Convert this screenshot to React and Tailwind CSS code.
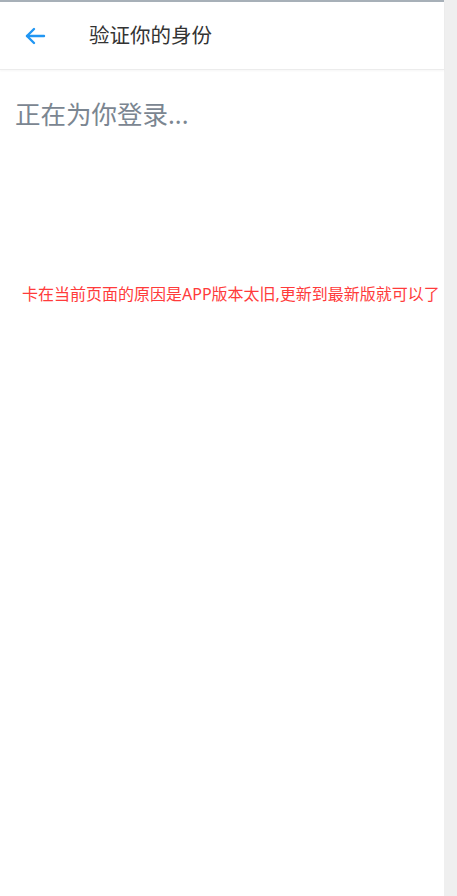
import React from "react";

const font = { fontFamily: '"Noto Sans", "Noto Sans CJK SC", sans-serif' };

function BackArrow() {
  return (
    <svg width="24" height="24" viewBox="0 0 24 24" fill="none" stroke="#2196f3" strokeWidth="2.4" strokeLinecap="round" strokeLinejoin="round">
      <path d="M21 12H4" />
      <path d="M11 5l-7 7 7 7" />
    </svg>
  );
}

export default function App() {
  return (
    <div className="flex h-[896px] w-[457px] bg-[#efefef]" style={font}>
      <div className="flex w-[444px] flex-col bg-white">
        <div className="h-[2px] bg-[#a7b0b8]" />
        <header className="flex h-[68px] items-center border-b border-[#ececec] shadow-[0_1px_2px_rgba(0,0,0,0.04)]">
          <button className="ml-[19px] flex h-8 w-8 items-center justify-center">
            <BackArrow />
          </button>
          <h1 className="ml-[38px] text-[20.5px] text-[#333333]">验证你的身份</h1>
        </header>
        <p className="mt-[25px] ml-[15px] text-[25.5px] leading-[38px] text-[#7b8691]">正在为你登录...</p>
        <p className="mt-[149px] ml-[22px] text-[16px] leading-[24px] text-[#ff3b3b]">
          卡在当前页面的原因是APP版本太旧,更新到最新版就可以了
        </p>
      </div>
    </div>
  );
}
